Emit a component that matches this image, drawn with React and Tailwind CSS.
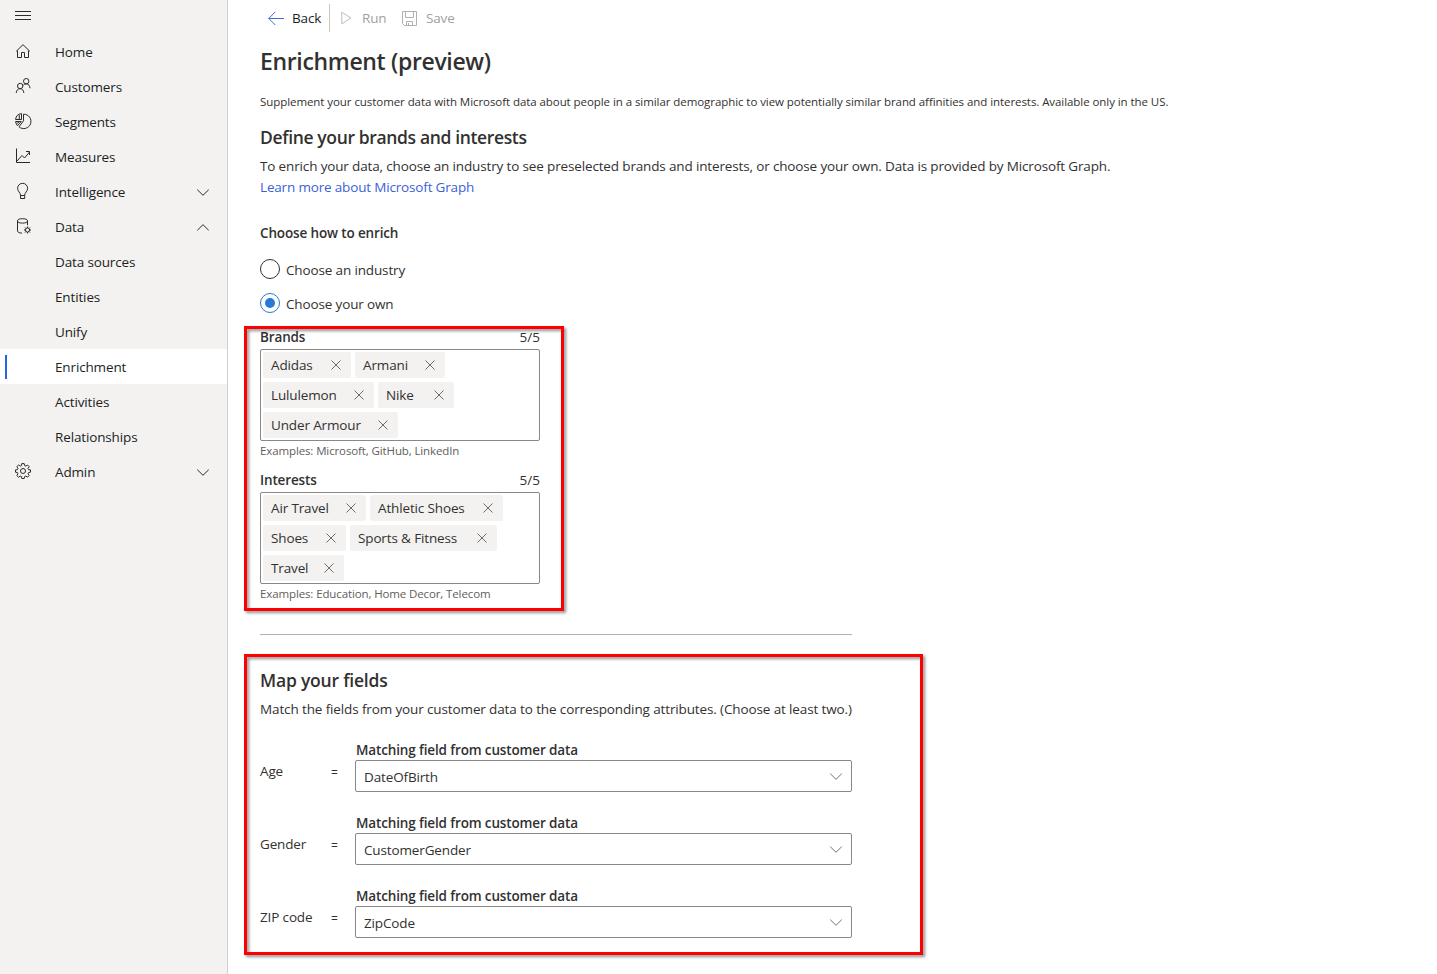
import React from "react";

const navItems = [
  { label: "Home", icon: "home" },
  { label: "Customers", icon: "people" },
  { label: "Segments", icon: "pie" },
  { label: "Measures", icon: "chart" },
  { label: "Intelligence", icon: "bulb", chevron: "down" },
  { label: "Data", icon: "data", chevron: "up" },
  { label: "Data sources" },
  { label: "Entities" },
  { label: "Unify" },
  { label: "Enrichment", active: true },
  { label: "Activities" },
  { label: "Relationships" },
  { label: "Admin", icon: "gear", chevron: "down" },
];

const brands = [
  { label: "Adidas", width: "w-[88px]" },
  { label: "Armani", width: "w-[90px]" },
  { label: "Lululemon", width: "w-[111px]" },
  { label: "Nike", width: "w-[76px]" },
  { label: "Under Armour", width: "w-[135px]" },
];

const interests = [
  { label: "Air Travel", width: "w-[103px]" },
  { label: "Athletic Shoes", width: "w-[133px]" },
  { label: "Shoes", width: "w-[83px]" },
  { label: "Sports & Fitness", width: "w-[147px]" },
  { label: "Travel", width: "w-[81px]" },
];

const fields = [
  { label: "Age", value: "DateOfBirth" },
  { label: "Gender", value: "CustomerGender" },
  { label: "ZIP code", value: "ZipCode" },
];

const iconPaths = {
  home: (
    <path d="M1.2 8.3 8 1.7l6.8 6.6M2.5 7.500v7h4V9.500h3v5h4v-7" />
  ),
  people: (
    <>
      <circle cx="5.2" cy="8" r="2.7" />
      <circle cx="11.2" cy="3.2" r="2.7" />
      <path d="M1.2 15c.2-2.600 1.700-4.300 4-4.300s3.200 1.500 3.700 4.300M8.300 7.200c.700-.700 1.500-1.300 2.900-1.300 2.300 0 3.600 1.700 3.800 4.300" />
    </>
  ),
  pie: (
    <>
      <path d="M8.500 1.200v6.600L4 13.800a7.200 7.200 0 1 0 4.500-12.600Z" />
      <path d="M6.500.6v5.900H.6A6.600 6.600 0 0 1 6.500.6ZM4.300 2v4.600M.600 8.500h5.600l-3.700 4.200A7 7 0 0 1 .600 8.500ZM1.500 10.800l2.600-2" />
    </>
  ),
  chart: (
    <path d="M1.500.500v14H15M2 13l5-5.500 2.500 2.500L14.600 4M11 3.500h3.500v3.500" />
  ),
  bulb: (
    <path d="M5.500 12.200c0-2.500-2.900-3.800-2.900-6.900a5 5 0 0 1 10 0c0 3.100-2.900 4.400-2.900 6.900M5.500 12.500v3h4.200v-3ZM5.500 12.500h4.200" />
  ),
  data: (
    <>
      <ellipse cx="7.500" cy="2.900" rx="5" ry="2.200" />
      <path d="M2.500 2.900v10c0 1.300 2 2.200 4.500 2.200M12.500 2.900v4.300" />
      <circle cx="12.500" cy="12" r="2.100" />
      <path d="M12.500 8.500v1.400M12.500 14.100v1.400M9 12h1.400M14.600 12H16M10 9.500l1 1M14 13.500l1 1M15 9.500l-1 1M11 13.500l-1 1" />
    </>
  ),
  gear: (
    <>
      <circle cx="8" cy="8" r="2.500" />
      <path d="M6.800.600h2.400l.400 2 1.200.500L12.500 2l1.700 1.700-1.200 1.700.500 1.200 2 .300v2.300l-2 .400-.500 1.200 1.200 1.700-1.700 1.700-1.700-1.200-1.200.500-.400 2H6.800l-.400-2-1.200-.500L3.500 14.200l-1.700-1.700L3 10.800l-.500-1.200-2-.400V6.900l2-.300L3 5.400 1.800 3.700 3.500 2l1.700 1.100 1.200-.500Z" />
    </>
  ),
};

function NavIcon({ name }) {
  return (
    <svg viewBox="0 0 16 16" className="size-4 overflow-visible" fill="none" stroke="#2b2a29" strokeWidth="1">
      {iconPaths[name]}
    </svg>
  );
}

function Chevron({ up, className }) {
  return (
    <svg viewBox="0 0 12 7" className={`h-[7px] w-3 ${className}`} fill="none" stroke="currentColor" strokeWidth="1">
      <path d={up ? "M.3 6.300 6 .700l5.700 5.600" : "M.3.700 6 6.300 11.700.700"} />
    </svg>
  );
}

function Sidebar() {
  return (
    <nav className="flex w-[228px] shrink-0 flex-col border-r border-[#d2d0ce] bg-[#f3f2f1]">
      <div className="h-[34px] pt-[11px] pl-[15px]">
        <svg viewBox="0 0 16 10" className="h-[10px] w-4" stroke="#2b2a29" strokeWidth="1">
          <path d="M0 .500h16M0 4.500h16M0 8.500h16" />
        </svg>
      </div>
      {navItems.map((item) => (
        <div key={item.label} className={`flex h-[35px] items-center ${item.active ? "bg-white" : ""}`}>
          <div className="flex w-[55px] items-center">
            {item.active && <span className="ml-[5px] h-6 w-0.5 bg-[#2266e3]" />}
            {item.icon && (
              <span className="-mt-0.5 ml-[15px]">
                <NavIcon name={item.icon} />
              </span>
            )}
          </div>
          <span className="flex-1 pt-px text-[#201f1e]">{item.label}</span>
          {item.chevron && <Chevron up={item.chevron === "up"} className="mt-px mr-[18px] text-[#2b2a29]" />}
        </div>
      ))}
    </nav>
  );
}

function Toolbar() {
  return (
    <div className="flex h-9 items-center">
      <svg viewBox="0 0 16 14" className="ml-2 h-[14px] w-4" fill="none" stroke="#4169d9" strokeWidth="1">
        <path d="M16 7.500H.800M7.300.800.800 7.500l6.500 6.500" />
      </svg>
      <span className="ml-2 w-[29px] whitespace-nowrap text-[#201f1e]">Back</span>
      <span className="ml-2 h-7 w-px bg-[#c8c6c4]" />
      <svg viewBox="0 0 11 14" className="ml-[11px] h-[14px] w-[11px]" fill="none" stroke="#bdbbb9">
        <path d="M.800 1.200v11.600L10 7Z" />
      </svg>
      <span className="ml-[10px] w-[25px] text-[#a19f9d]">Run</span>
      <svg viewBox="0 0 15 15" className="ml-[15px] size-[15px]" fill="none" stroke="#b3b1af">
        <path d="M.500.500h14v14H2.500l-2-2ZM3.500.500v6h8v-6M4.500 14.500v-4h6v4M6.500 14v-2" />
      </svg>
      <span className="ml-[9px] text-[#a19f9d]">Save</span>
    </div>
  );
}

function Chip({ label, width }) {
  return (
    <span className={`flex h-[26px] items-center justify-between rounded-xs bg-[#f3f2f1] pr-[10px] pl-2 ${width}`}>
      <span className="whitespace-nowrap">{label}</span>
      <svg viewBox="0 0 10 10" className="size-[10px]" stroke="#605e5c" strokeWidth="0.900">
        <path d="m.500.500 9 9M9.500.500l-9 9" />
      </svg>
    </span>
  );
}

function TagPicker({ title, tags, hint }) {
  return (
    <div className="w-[280px]">
      <div className="flex h-[22px] items-center justify-between pb-0.5">
        <span className="font-semibold">{title}</span>
        <span className="tracking-normal">5/5</span>
      </div>
      <div className="flex h-[92px] flex-wrap content-start gap-1 rounded-xs border border-[#8a8886] p-0.5">
        {tags.map((tag) => (
          <Chip key={tag.label} {...tag} />
        ))}
      </div>
      <div className="flex h-5 items-center text-[11.5px] tracking-[-0.12px] text-[#605e5c]">{hint}</div>
    </div>
  );
}

function Radio({ label, checked }) {
  return (
    <div className="flex h-[34px] items-center">
      <span className={`flex size-5 items-center justify-center rounded-full border ${checked ? "border-[#2878d8]" : "border-[#323130]"}`}>
        {checked && <span className="size-[10px] rounded-full bg-[#2878d8]" />}
      </span>
      <span className="ml-1.5 pt-0.5">{label}</span>
    </div>
  );
}

function FieldRow({ label, value }) {
  return (
    <div className="mb-[21px] flex h-[52px] w-[592px]">
      <span className="w-[71px] pt-[21px]">{label}</span>
      <span className="w-6 pt-[23px] text-[12px]">=</span>
      <div className="flex-1">
        <div className="h-5 pl-px font-semibold">Matching field from customer data</div>
        <div className="flex h-8 items-center justify-between rounded-xs border border-[#8a8886] pr-[9px] pl-2">
          <span className="pt-0.5">{value}</span>
          <Chevron className="text-[#6f6e88]" />
        </div>
      </div>
    </div>
  );
}

export default function App() {
  return (
    <div className="relative flex h-[974px] w-[1437px] overflow-hidden bg-white font-['Open_Sans',sans-serif] text-[13.5px] leading-5 tracking-[-0.14px] text-[#323130]">
      <Sidebar />
      <main className="flex-1 pl-8 whitespace-nowrap">
        <Toolbar />
        <h1 className="flex h-[52px] items-center pb-0.5 text-[23px] font-semibold tracking-[-0.34px]">Enrichment (preview)</h1>
        <p className="flex h-7 items-center text-[11.5px] tracking-[-0.066px]">
          Supplement your customer data with Microsoft data about people in a similar demographic to view potentially similar brand affinities and interests. Available only in the US.
        </p>
        <h2 className="flex h-10 items-center pt-0.5 text-[17.5px] font-semibold tracking-[-0.36px]">Define your brands and interests</h2>
        <p className="leading-[21px] tracking-[-0.147px]">
          To enrich your data, choose an industry to see preselected brands and interests, or choose your own. Data is provided by Microsoft Graph.
        </p>
        <a className="block leading-[21px] tracking-[-0.17px] text-[#3b62d6]">Learn more about Microsoft Graph</a>
        <h3 className="mt-[25px] mb-[9px] font-semibold">Choose how to enrich</h3>
        <Radio label="Choose an industry" />
        <Radio label="Choose your own" checked />
        <div className="mt-[7px] flex flex-col gap-[9px]">
          <TagPicker title="Brands" tags={brands} hint="Examples: Microsoft, GitHub, LinkedIn" />
          <TagPicker title="Interests" tags={interests} hint="Examples: Education, Home Decor, Telecom" />
        </div>
        <hr className="mt-[30px] w-[592px] border-[#b3b1af]" />
        <h2 className="mt-[35px] text-[17.5px] font-semibold tracking-[-0.2px]">Map your fields</h2>
        <p className="mt-[9px] mb-5 leading-[21px] tracking-[-0.125px]">
          Match the fields from your customer data to the corresponding attributes. (Choose at least two.)
        </p>
        {fields.map((field) => (
          <FieldRow key={field.label} {...field} />
        ))}
      </main>
      <div className="pointer-events-none absolute top-[326px] left-[244px] h-[285px] w-[320px] border-3 border-[#ff0000] drop-shadow-[2px_2px_1.5px_rgba(0,0,0,0.45)]" />
      <div className="pointer-events-none absolute top-[654px] left-[244px] h-[301px] w-[679px] border-3 border-[#ff0000] drop-shadow-[2px_2px_1.5px_rgba(0,0,0,0.45)]" />
    </div>
  );
}
